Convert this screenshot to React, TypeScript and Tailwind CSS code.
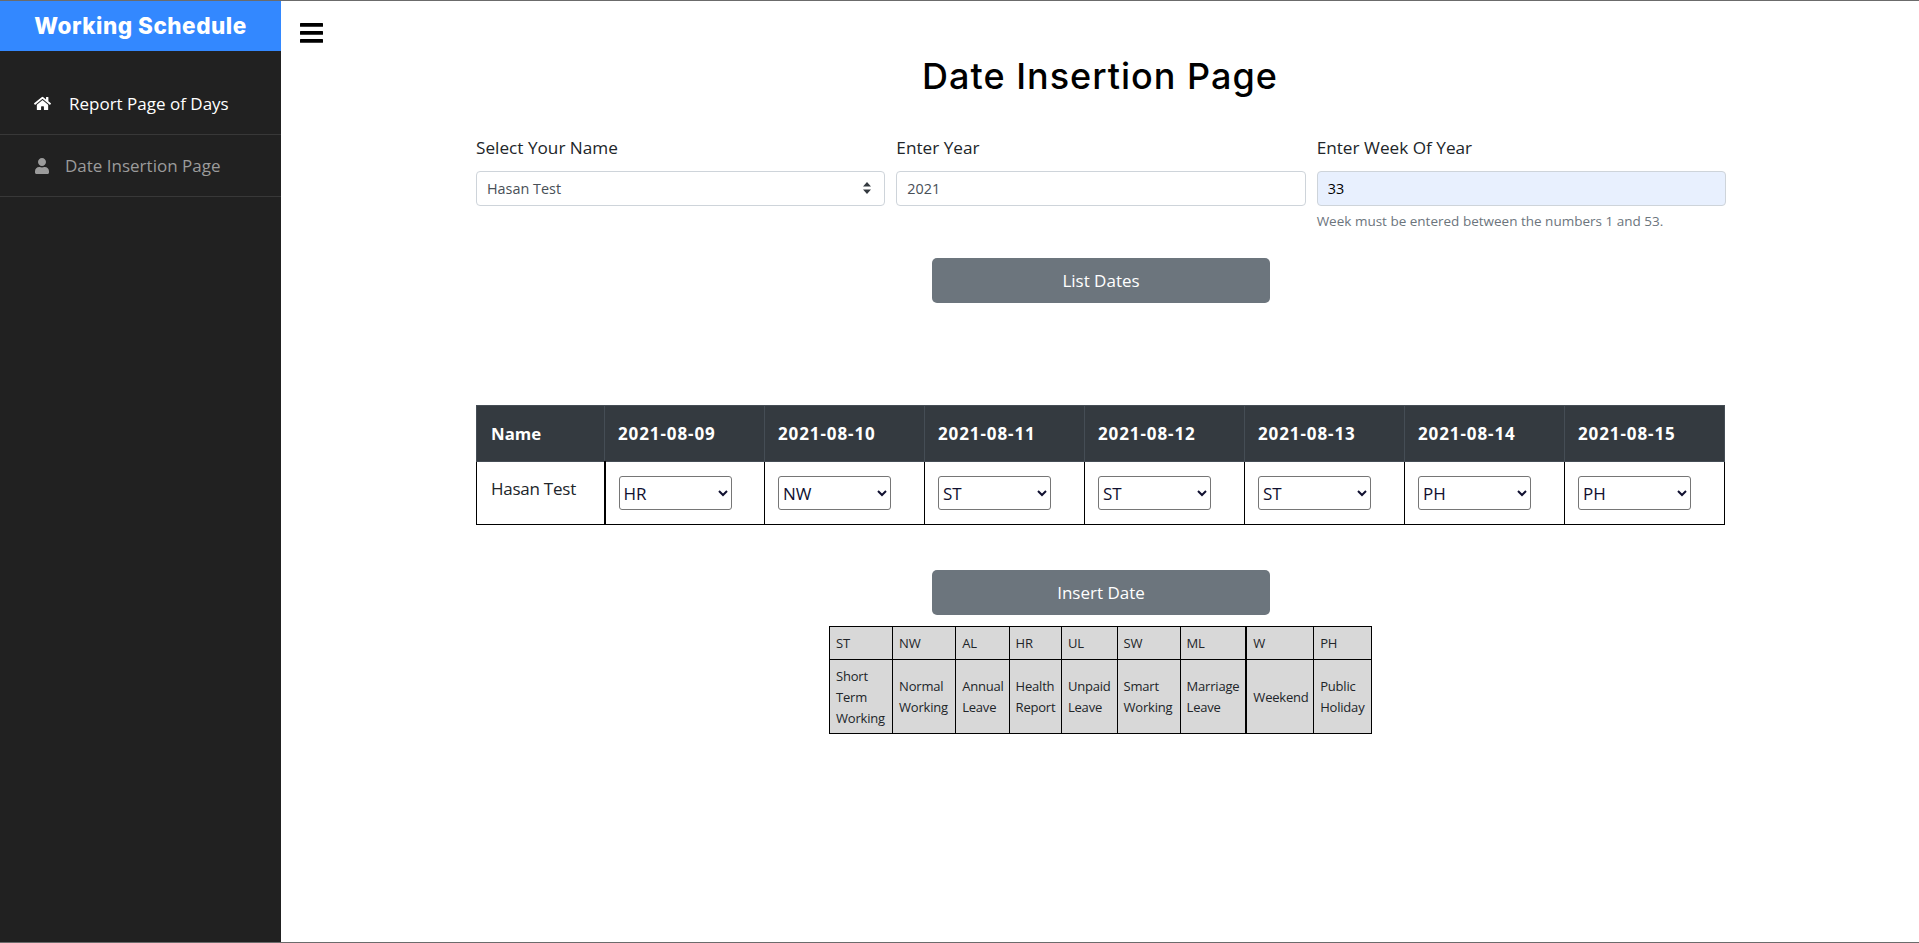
import { FaHome, FaUser } from "react-icons/fa";

const dates = ["2021-08-09", "2021-08-10", "2021-08-11", "2021-08-12", "2021-08-13", "2021-08-14", "2021-08-15"];
const values = ["HR", "NW", "ST", "ST", "ST", "PH", "PH"];
const options = ["ST", "NW", "AL", "HR", "UL", "SW", "ML", "W", "PH"];
const legend: [string, string[], number][] = [
  ["ST", ["Short", "Term", "Working"], 59],
  ["NW", ["Normal", "Working"], 59],
  ["AL", ["Annual", "Leave"], 50],
  ["HR", ["Health", "Report"], 49],
  ["UL", ["Unpaid", "Leave"], 52],
  ["SW", ["Smart", "Working"], 59],
  ["ML", ["Marriage", "Leave"], 62],
  ["W", ["Weekend"], 63],
  ["PH", ["Public", "Holiday"], 54],
];

const font = "font-['Open_Sans','Noto_Sans',sans-serif]";

export default function App() {
  return (
    <div className={`${font} flex min-h-[943px] flex-col bg-white text-[#212529]`}>
      <div className="h-px bg-[#6b6b6b]" />
      <div className="flex flex-1">
        <aside className="w-[281px] shrink-0 bg-[#212121]">
          <div className="flex h-[50px] items-center justify-center bg-[#3388ff] pb-[1px]">
            <span className="font-['Inter',sans-serif] text-[22.5px] font-extrabold tracking-[0.5px] text-white">Working Schedule</span>
          </div>
          <nav className="mt-[22px]">
            <div className="flex h-[62px] items-center border-b border-[#383838] pl-[34px] text-white">
              <FaHome className="text-[17px]" />
              <span className="ml-[18px] text-[17px]">Report Page of Days</span>
            </div>
            <div className="flex h-[62px] items-center border-b border-[#383838] pl-[34px] text-[#9b9b9b]">
              <FaUser className="text-[16px]" />
              <span className="ml-[15px] text-[17px]">Date Insertion Page</span>
            </div>
          </nav>
        </aside>

        <main className="flex-1">
          <div className="pl-[19px] pt-[22px]">
            <svg viewBox="0 0 23 20" className="h-[20px] w-[23px]" fill="#000">
              <rect x="0" y="0" width="23" height="3.8" rx="0.5" />
              <rect x="0" y="8" width="23" height="3.8" rx="0.5" />
              <rect x="0" y="16" width="23" height="3.8" rx="0.5" />
            </svg>
          </div>
          <h1 className="mt-[12px] text-center font-['Inter',sans-serif] text-[36px] leading-[43px] font-medium tracking-[1px] text-black">Date Insertion Page</h1>

          <div className="ml-[195px] mt-[38px] w-[1250px]">
            <div className="grid grid-cols-3 gap-x-[11px]">
              <div>
                <div className="text-[17.2px] leading-[24px]">Select Your Name</div>
                <div className="relative mt-[11px]">
                  <select defaultValue="Hasan Test" className="h-[35px] w-full appearance-none rounded-[4px] border border-[#ced4da] bg-white pl-[10px] text-[14.4px] text-[#495057]">
                    <option>Hasan Test</option>
                  </select>
                  <svg viewBox="0 0 8 12" className="pointer-events-none absolute right-[14px] top-[11px] h-[12px] w-[8px]" fill="#343a40">
                    <path d="M4 0 L8 4.6 H0 Z M4 12 L8 7.4 H0 Z" />
                  </svg>
                </div>
              </div>
              <div>
                <div className="text-[17.2px] leading-[24px]">Enter Year</div>
                <input readOnly value="2021" className="mt-[11px] h-[35px] w-full rounded-[4px] border border-[#ced4da] bg-white pl-[10px] text-[14.4px] text-[#495057]" />
              </div>
              <div>
                <div className="text-[17.2px] leading-[24px]">Enter Week Of Year</div>
                <input readOnly value="33" className="mt-[11px] h-[35px] w-full rounded-[4px] border border-[#ced4da] bg-[#e8f0fe] pl-[10px] text-[14.4px] text-black" />
                <div className="mt-[6px] text-[13.5px] leading-[19px] text-[#6c757d]">Week must be entered between the numbers 1 and 53.</div>
              </div>
            </div>

            <div className="mt-[27px] flex justify-center">
              <button className="h-[45px] w-[338px] rounded-[5px] bg-[#6c757d] text-[17px] text-white">List Dates</button>
            </div>

            <table className="mt-[102px] w-[1249px] table-fixed border-collapse">
              <thead>
                <tr className="h-[56px] bg-[#343a40] text-white">
                  <th className="w-[128px] border border-[#454d55] pl-[14px] text-left text-[16.8px] font-bold">Name</th>
                  {dates.map((d) => (
                    <th key={d} className="border border-[#454d55] pl-[13px] text-left text-[17px] font-bold tracking-[0.9px]">{d}</th>
                  ))}
                </tr>
              </thead>
              <tbody>
                <tr className="h-[63px]">
                  <td className="border border-black pb-[8px] pl-[14px] text-[17px] tracking-[-0.25px] text-[#212529]">Hasan Test</td>
                  {values.map((v, i) => (
                    <td key={i} className={`${i === 0 ? "border-l-2" : "border-l"} border-y border-r border-black pl-[13px]`}>
                      <select defaultValue={v} className="h-[34px] w-[113px] rounded-[3px] border border-[#767676] bg-white pl-[0px] text-[17px] text-[#101030]">
                        {options.map((o) => (
                          <option key={o}>{o}</option>
                        ))}
                      </select>
                    </td>
                  ))}
                </tr>
              </tbody>
            </table>

            <div className="mt-[45px] flex justify-center">
              <button className="h-[45px] w-[338px] rounded-[5px] bg-[#6c757d] text-[17px] text-white">Insert Date</button>
            </div>

            <div className="mt-[11px] flex justify-center pr-[1px]">
              <table className="table-fixed border-collapse bg-[#d8d8d8] text-[13px] leading-[21px] tracking-[-0.2px] text-[#212529]" style={{ width: 543 }}>
                <tbody>
                  <tr className="h-[33px]">
                    {legend.map(([k, , w]) => (
                      <td key={k} style={{ width: w }} className={`${k === "W" ? "border-l-2" : "border-l"} border-y border-r border-black pl-[6px]`}>{k}</td>
                    ))}
                  </tr>
                  <tr className="h-[74px]">
                    {legend.map(([k, lines]) => (
                      <td key={k} className={`${k === "W" ? "border-l-2" : "border-l"} whitespace-nowrap border-y border-r border-black pl-[6px] pt-[1px]`}>
                        {lines.map((l) => (
                          <div key={l}>{l}</div>
                        ))}
                      </td>
                    ))}
                  </tr>
                </tbody>
              </table>
            </div>
          </div>
        </main>
      </div>
      <div className="h-px bg-[#6b6b6b]" />
    </div>
  );
}
